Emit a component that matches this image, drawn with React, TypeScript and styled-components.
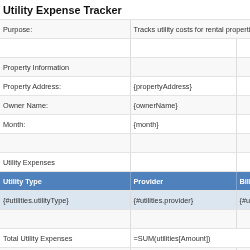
import styled, { createGlobalStyle } from 'styled-components'

const GlobalStyle = createGlobalStyle`
  html, body {
    margin: 0;
    padding: 0;
    background: #ffffff;
    overflow: hidden;
  }
  body {
    font-family: 'Liberation Sans', Arial, sans-serif;
  }
`

const Sheet = styled.table`
  border-collapse: collapse;
  table-layout: fixed;
  width: 476px;
  font-size: 7.3px;
  color: #333333;
  will-change: transform;
`

const Row = styled.tr<{ $tone?: 'plain' | 'alt' | 'head' | 'data' }>`
  height: 19px;
  background: ${({ $tone }) =>
    $tone === 'alt'
      ? '#f8f8f8'
      : $tone === 'head'
        ? '#4f81bd'
        : $tone === 'data'
          ? '#dce6f1'
          : '#ffffff'};
  color: ${({ $tone }) => ($tone === 'head' ? '#ffffff' : '#333333')};
  font-weight: ${({ $tone }) => ($tone === 'head' ? 700 : 400)};
`

const Cell = styled.td<{ $head?: boolean }>`
  padding: 0 3px;
  height: 19px;
  box-sizing: border-box;
  white-space: nowrap;
  overflow: visible;
  border-bottom: 1px solid #e4e4e4;
  border-right: 1px solid ${({ $head }) => ($head ? '#7f9fcc' : '#dddddd')};
  vertical-align: middle;
`

const TitleCell = styled.td`
  padding: 0 3px;
  height: 19px;
  font-size: 10.8px;
  font-weight: 700;
  color: #111111;
  white-space: nowrap;
  border-bottom: 1px solid #e4e4e4;
`

type Line = { label?: string; value?: string }

const infoRows: Line[] = [
  {},
  { label: 'Property Information' },
  { label: 'Property Address:', value: '{propertyAddress}' },
  { label: 'Owner Name:', value: '{ownerName}' },
  { label: 'Month:', value: '{month}' },
  {},
  { label: 'Utility Expenses' },
]

const App = () => {
  let n = 1
  const tone = () => (n++ % 2 === 0 ? 'plain' : 'alt')

  return (
    <>
      <GlobalStyle />
      <Sheet>
        <colgroup>
          <col style={{ width: 130 }} />
          <col style={{ width: 106 }} />
          <col style={{ width: 120 }} />
          <col style={{ width: 120 }} />
        </colgroup>
        <tbody>
          <Row>
            <TitleCell colSpan={4}>Utility Expense Tracker</TitleCell>
          </Row>
          <Row $tone={tone()}>
            <Cell>Purpose:</Cell>
            <Cell colSpan={3}>Tracks utility costs for rental properties</Cell>
          </Row>
          {infoRows.map((r, i) => (
            <Row key={i} $tone={tone()}>
              <Cell>{r.label}</Cell>
              <Cell>{r.value}</Cell>
              <Cell />
              <Cell />
            </Row>
          ))}
          <Row $tone="head">
            <Cell $head>Utility Type</Cell>
            <Cell $head>Provider</Cell>
            <Cell $head>Billing Period</Cell>
            <Cell $head>Amount</Cell>
          </Row>
          <Row $tone="data">
            <Cell>{'{#utilities.utilityType}'}</Cell>
            <Cell>{'{#utilities.provider}'}</Cell>
            <Cell>{'{#utilities.billingPeriod}'}</Cell>
            <Cell>{'{#utilities.amount}{/utilities}'}</Cell>
          </Row>
          <Row $tone="alt">
            <Cell />
            <Cell />
            <Cell />
            <Cell />
          </Row>
          <Row>
            <Cell>Total Utility Expenses</Cell>
            <Cell colSpan={3}>=SUM(utilities[Amount])</Cell>
          </Row>
          <Row $tone="alt">
            <Cell />
            <Cell />
            <Cell />
            <Cell />
          </Row>
        </tbody>
      </Sheet>
    </>
  )
}

export default App
